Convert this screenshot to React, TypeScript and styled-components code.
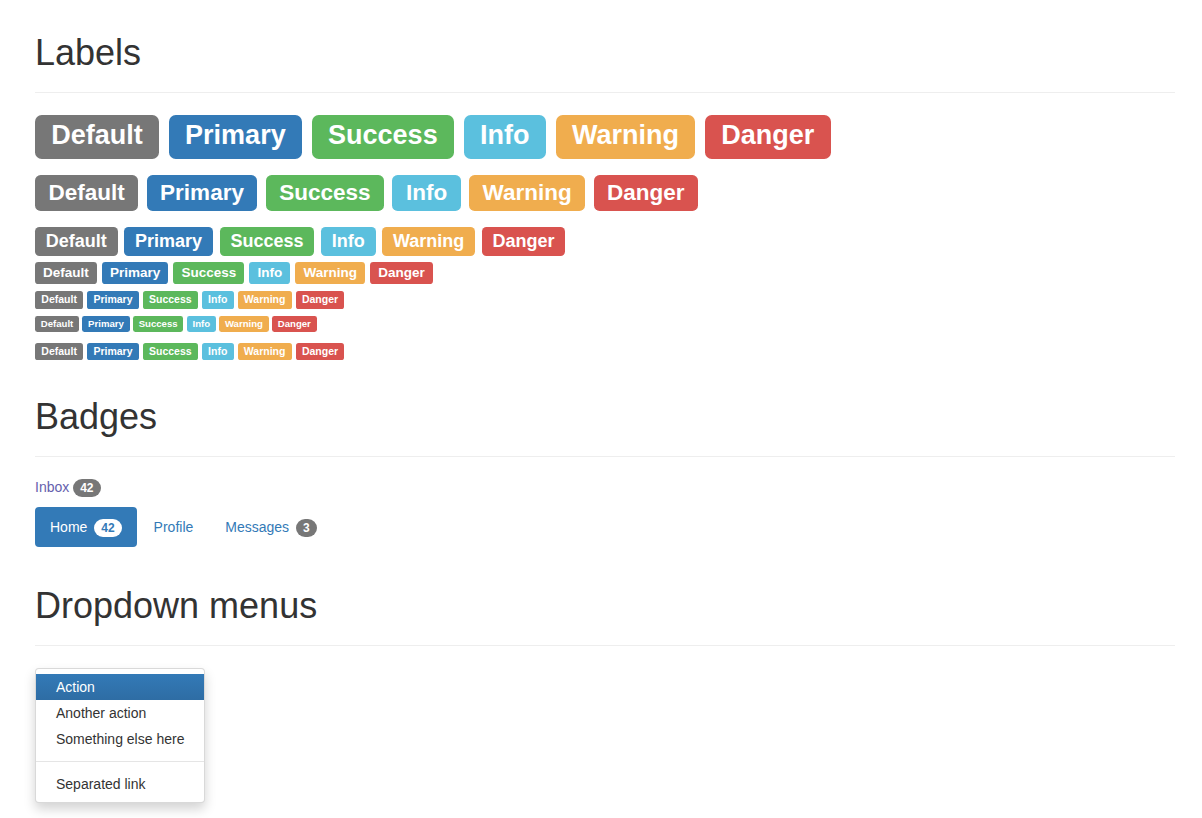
import React from "react";
import styled, { createGlobalStyle, css } from "styled-components";

const Global = createGlobalStyle`
  * { box-sizing: border-box; }
  html, body { margin: 0; padding: 0; background: #fff; }
  body {
    font-family: "Liberation Sans", Arial, Helvetica, sans-serif;
    font-size: 14px;
    line-height: 1.42857143;
    color: #333;
  }
`;

const Container = styled.div`
  width: 1140px;
  margin-left: 35px;
  padding-bottom: 20px;
  &::after { content: ""; display: table; clear: both; }
`;

const PageHeader = styled.div<{ $top: number }>`
  padding-bottom: 9px;
  margin: ${(p) => p.$top}px 0 20px;
  border-bottom: 1px solid #eee;
`;

const headingBase = css`
  font-family: inherit;
  font-weight: 500;
  line-height: 1.1;
  color: inherit;
`;

const H1 = styled.h1`
  ${headingBase};
  font-size: 36px;
  margin: 20px 0 10px;
`;
const H2 = styled.h2`
  ${headingBase};
  font-size: 30px;
  margin: 20px 0 10px;
`;
const H3 = styled.h3`
  ${headingBase};
  font-size: 24px;
  margin: 20px 0 10px;
`;
const H4 = styled.h4`
  ${headingBase};
  font-size: 18px;
  margin: 10px 0;
`;
const H5 = styled.h5`
  ${headingBase};
  font-size: 14px;
  margin: 10px 0;
`;
const H6 = styled.h6`
  ${headingBase};
  font-size: 12px;
  margin: 9px 0 10px;
`;
const P = styled.p`
  margin: 0 0 10px;
`;

const colors: Record<string, string> = {
  default: "#777",
  primary: "#337ab7",
  success: "#5cb85c",
  info: "#5bc0de",
  warning: "#f0ad4e",
  danger: "#d9534f",
};

const Label = styled.span<{ $kind: string; $scale?: string }>`
  display: inline;
  padding: 0.2em 0.6em 0.3em;
  font-size: ${(p) => p.$scale ?? "75%"};
  font-weight: 700;
  line-height: 1;
  color: #fff;
  text-align: center;
  white-space: nowrap;
  vertical-align: baseline;
  border-radius: 0.25em;
  background-color: ${(p) => colors[p.$kind]};
`;

const kinds = ["default", "primary", "success", "info", "warning", "danger"];
const names: Record<string, string> = {
  default: "Default",
  primary: "Primary",
  success: "Success",
  info: "Info",
  warning: "Warning",
  danger: "Danger",
};

const LabelSet = ({ scale }: { scale?: string }) => (
  <>
    {kinds.map((k, i) => (
      <React.Fragment key={k}>
        {i > 0 ? " " : null}
        <Label $kind={k} $scale={scale}>
          {names[k]}
        </Label>
      </React.Fragment>
    ))}
  </>
);

const Badge = styled.span<{ $inverse?: boolean }>`
  display: inline-block;
  min-width: 10px;
  padding: 3px 7px;
  font-size: 12px;
  font-weight: 700;
  line-height: 1;
  text-align: center;
  white-space: nowrap;
  vertical-align: middle;
  border-radius: 10px;
  color: ${(p) => (p.$inverse ? "#337ab7" : "#fff")};
  background-color: ${(p) => (p.$inverse ? "#fff" : "#777")};
`;

const InboxLink = styled.a`
  color: #6560ad;
  text-decoration: none;
`;

const Pills = styled.ul`
  margin: 0;
  padding: 0;
  list-style: none;
  display: flex;
  gap: 2px;
`;

const Pill = styled.li``;

const PillLink = styled.a<{ $active?: boolean }>`
  display: block;
  padding: 10px 15px;
  border-radius: 4px;
  text-decoration: none;
  color: ${(p) => (p.$active ? "#fff" : "#337ab7")};
  background-color: ${(p) => (p.$active ? "#337ab7" : "transparent")};
  & > span { margin-left: 3px; }
`;

const Menu = styled.ul`
  display: inline-block;
  min-width: 160px;
  margin: 2px 0 20px;
  padding: 5px 0;
  list-style: none;
  font-size: 14px;
  background-color: #fff;
  border: 1px solid rgba(0, 0, 0, 0.15);
  border-radius: 4px;
  box-shadow: 0 6px 12px rgba(0, 0, 0, 0.175);
`;

const MenuItem = styled.li``;

const MenuLink = styled.a<{ $active?: boolean }>`
  display: block;
  padding: 3px 20px;
  clear: both;
  font-weight: 400;
  line-height: 1.42857143;
  white-space: nowrap;
  text-decoration: none;
  color: ${(p) => (p.$active ? "#fff" : "#333")};
  background: ${(p) =>
    p.$active ? "linear-gradient(to bottom, #337ab7 0, #2e6da4 100%)" : "transparent"};
`;

const Divider = styled.li`
  height: 1px;
  margin: 9px 0;
  overflow: hidden;
  background-color: #e5e5e5;
`;

export default function App() {
  return (
    <>
      <Global />
      <Container>
        <PageHeader $top={33}>
          <H1>Labels</H1>
        </PageHeader>
        <H1><LabelSet /></H1>
        <H2><LabelSet /></H2>
        <H3><LabelSet /></H3>
        <H4><LabelSet /></H4>
        <H5><LabelSet /></H5>
        <H6><LabelSet scale="0.8em" /></H6>
        <P><LabelSet /></P>

        <PageHeader $top={37}>
          <H1>Badges</H1>
        </PageHeader>
        <P>
          <InboxLink href="#">
            Inbox <Badge>42</Badge>
          </InboxLink>
        </P>
        <Pills>
          <Pill>
            <PillLink href="#" $active>
              Home <Badge $inverse>42</Badge>
            </PillLink>
          </Pill>
          <Pill>
            <PillLink href="#">Profile</PillLink>
          </Pill>
          <Pill>
            <PillLink href="#">
              Messages <Badge>3</Badge>
            </PillLink>
          </Pill>
        </Pills>

        <PageHeader $top={39}>
          <H1>Dropdown menus</H1>
        </PageHeader>
        <div>
          <Menu>
            <MenuItem>
              <MenuLink href="#" $active>Action</MenuLink>
            </MenuItem>
            <MenuItem>
              <MenuLink href="#">Another action</MenuLink>
            </MenuItem>
            <MenuItem>
              <MenuLink href="#">Something else here</MenuLink>
            </MenuItem>
            <Divider role="separator" />
            <MenuItem>
              <MenuLink href="#">Separated link</MenuLink>
            </MenuItem>
          </Menu>
        </div>
      </Container>
    </>
  );
}
